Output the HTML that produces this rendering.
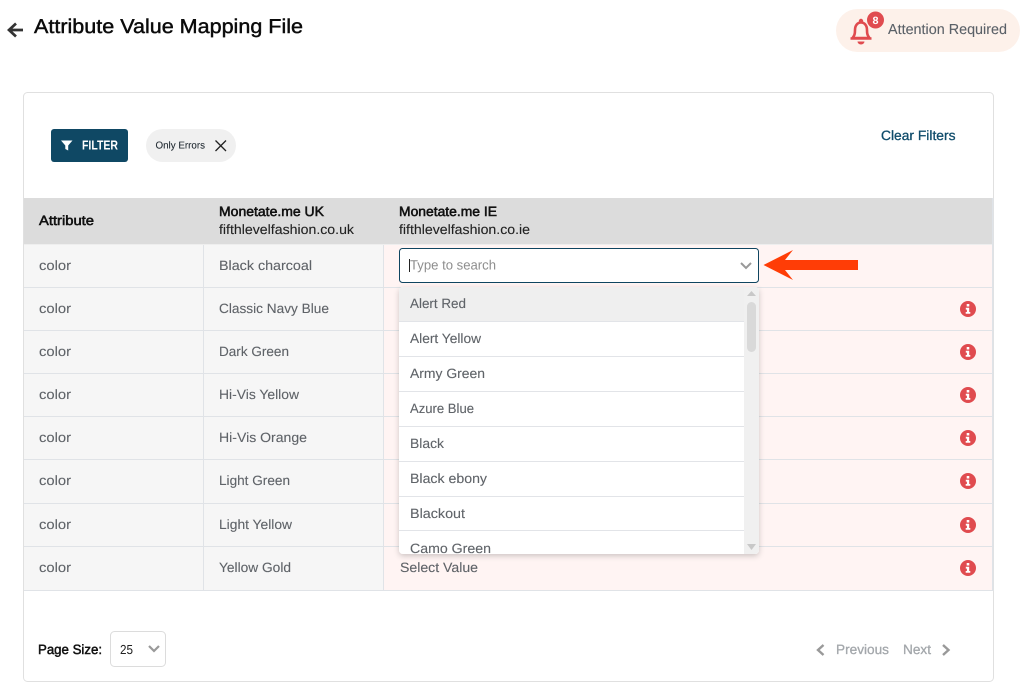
<!DOCTYPE html>
<html lang="en"><head><meta charset="utf-8"><title>Attribute Value Mapping File</title>
<style>
html,body{margin:0;padding:0;background:#fff;width:1022px;height:690px;overflow:hidden}
svg{display:block}
text{font-family:"Liberation Sans",Arial,sans-serif;font-size:13.5px;fill:#5f6368}
.t{fill:#5f6368;stroke:#5f6368;stroke-width:.1px}
.h{fill:#111;stroke:#111;stroke-width:.55px}
.k{fill:#222;stroke:#222;stroke-width:.1px}
</style></head><body>
<svg width="1022" height="690" viewBox="0 0 1022 690" xmlns="http://www.w3.org/2000/svg" text-rendering="geometricPrecision">
<rect width="1022" height="690" fill="#fff"/>
<!-- header -->
<path d="M23 30H9.500M16 23.500l-7 6.500 7 6.500" fill="none" stroke="#333" stroke-width="2.700"/>
<text x="34" y="33" textLength="269" lengthAdjust="spacingAndGlyphs" style="font-size:20px;fill:#0b0b0b;stroke:#0b0b0b;stroke-width:.45px">Attribute Value Mapping File</text>
<rect x="836" y="9" width="184" height="43" rx="21.500" fill="#fdf1ea"/>
<path d="M852.500 38c2-2.500 2.500-4 2.500-8 0-4.500 2.500-7.500 6-7.500s6 3 6 7.500c0 4 .5 5.500 2.500 8z" fill="none" stroke="#e04b4f" stroke-width="2.600" stroke-linejoin="round"/>
<path d="M850.500 38.500h21" stroke="#e04b4f" stroke-width="2.600"/>
<path d="M857.500 41.500h7a3.500 3 0 0 1-7 0z" fill="#e04b4f"/>
<circle cx="861" cy="21" r="2.200" fill="#e04b4f"/>
<circle cx="875.500" cy="20" r="8.500" fill="#e04b4f"/>
<text x="872.500" y="24" textLength="6" lengthAdjust="spacingAndGlyphs" style="font-size:10.500px;font-weight:bold;fill:#fff">8</text>
<text x="888" y="34" textLength="119" lengthAdjust="spacingAndGlyphs" style="font-size:14.500px;fill:#5b6168;stroke:#5b6168;stroke-width:.1px">Attention Required</text>
<!-- card -->
<rect x="23.500" y="92.500" width="970" height="589" rx="4" fill="#fff" stroke="#e0e0e0"/>
<rect x="51" y="129" width="77" height="33" rx="3" fill="#0f4864"/>
<path d="M61 140.500h11.500l-4.300 5v5l-2.900-1.500v-3.500z" fill="#fff"/>
<text x="82" y="149.500" textLength="36" lengthAdjust="spacingAndGlyphs" style="font-size:13px;font-weight:bold;fill:#fff">FILTER</text>
<rect x="146" y="129" width="90" height="33" rx="16.500" fill="#f0f0f0"/>
<text x="155.500" y="148.500" textLength="49.500" lengthAdjust="spacingAndGlyphs" style="font-size:10px;fill:#222b33;stroke:#222b33;stroke-width:.1px">Only Errors</text>
<path d="M215.500 140.500l10.500 10.500M226 140.500l-10.500 10.500" stroke="#222" stroke-width="1.300"/>
<text x="881" y="140" textLength="74.500" lengthAdjust="spacingAndGlyphs" style="font-size:13.500px;fill:#0f4c6b;stroke:#0f4c6b;stroke-width:.3px">Clear Filters</text>
<!-- table -->
<rect x="24" y="198" width="969" height="46.500" fill="#dcdcdc"/>
<text class="h" x="39" y="225" textLength="55" lengthAdjust="spacingAndGlyphs">Attribute</text>
<text class="h" x="219" y="216" textLength="105" lengthAdjust="spacingAndGlyphs">Monetate.me UK</text>
<text class="k" x="219" y="234" textLength="135" lengthAdjust="spacingAndGlyphs">fifthlevelfashion.co.uk</text>
<text class="h" x="399" y="216" textLength="98" lengthAdjust="spacingAndGlyphs">Monetate.me IE</text>
<text class="k" x="399" y="234" textLength="131" lengthAdjust="spacingAndGlyphs">fifthlevelfashion.co.ie</text>
<rect x="24" y="245" width="360" height="345" fill="#f6f6f6"/>
<rect x="384" y="245" width="608" height="345" fill="#fff4f3"/>
<g stroke="#e0e3e7" stroke-width="1" fill="none">
<path d="M24 287.500H992M24 330.500H992M24 373.500H992M24 416.500H992M24 459.500H992M24 503.500H992M24 546.500H992M24 590.500H992"/>
<path d="M203.500 245V590M383.500 245V590"/>
</g>
<rect x="992" y="198" width="1.500" height="393" fill="#dfe3e8"/>
<g>
<text class="t" x="39" y="270" textLength="32" lengthAdjust="spacingAndGlyphs">color</text>
<text class="t" x="39" y="313" textLength="32" lengthAdjust="spacingAndGlyphs">color</text>
<text class="t" x="39" y="356" textLength="32" lengthAdjust="spacingAndGlyphs">color</text>
<text class="t" x="39" y="399" textLength="32" lengthAdjust="spacingAndGlyphs">color</text>
<text class="t" x="39" y="442" textLength="32" lengthAdjust="spacingAndGlyphs">color</text>
<text class="t" x="39" y="485" textLength="32" lengthAdjust="spacingAndGlyphs">color</text>
<text class="t" x="39" y="529" textLength="32" lengthAdjust="spacingAndGlyphs">color</text>
<text class="t" x="39" y="572" textLength="32" lengthAdjust="spacingAndGlyphs">color</text>
<text class="t" x="219" y="270" textLength="93" lengthAdjust="spacingAndGlyphs">Black charcoal</text>
<text class="t" x="219" y="313" textLength="110" lengthAdjust="spacingAndGlyphs">Classic Navy Blue</text>
<text class="t" x="219" y="356" textLength="70" lengthAdjust="spacingAndGlyphs">Dark Green</text>
<text class="t" x="219" y="399" textLength="80" lengthAdjust="spacingAndGlyphs">Hi-Vis Yellow</text>
<text class="t" x="219" y="442" textLength="88" lengthAdjust="spacingAndGlyphs">Hi-Vis Orange</text>
<text class="t" x="219" y="485" textLength="71" lengthAdjust="spacingAndGlyphs">Light Green</text>
<text class="t" x="219" y="529" textLength="73" lengthAdjust="spacingAndGlyphs">Light Yellow</text>
<text class="t" x="219" y="572" textLength="72" lengthAdjust="spacingAndGlyphs">Yellow Gold</text>
<text class="t" x="400" y="572" textLength="78" lengthAdjust="spacingAndGlyphs">Select Value</text>
</g>
<!-- info icons -->
<defs><g id="info"><circle r="8" fill="#e04b4f"/><rect x="-1.300" y="-5" width="2.600" height="2.500" fill="#fff"/><path d="M-2.200-1.200H1.200V3H2.300V4.800H-2.300V3H-1.100V.6H-2.200z" fill="#fff"/></g></defs>
<use href="#info" x="968" y="309"/>
<use href="#info" x="968" y="352"/>
<use href="#info" x="968" y="395"/>
<use href="#info" x="968" y="438"/>
<use href="#info" x="968" y="481"/>
<use href="#info" x="968" y="525"/>
<use href="#info" x="968" y="568"/>
<!-- input -->
<rect x="399.500" y="248.500" width="359" height="34" rx="3" fill="#fff" stroke="#0f4560"/>
<rect x="409" y="259" width="1" height="13" fill="#222"/>
<text x="410" y="269.500" textLength="86" lengthAdjust="spacingAndGlyphs" style="font-size:13.500px;fill:#8e8e8e">Type to search</text>
<path d="M741 263l5 5 5-5" fill="none" stroke="#999" stroke-width="2"/>
<path d="M763.500 265L793 250 785 260H858V270H785L793 280Z" fill="#ff3d06"/>
<!-- dropdown -->
<defs><filter id="s" x="-10%" y="-10%" width="120%" height="125%"><feDropShadow dx="0" dy="2" stdDeviation="3" flood-color="#000" flood-opacity=".2"/></filter>
<clipPath id="c"><rect x="399" y="287" width="360" height="267" rx="4"/></clipPath></defs>
<rect x="399" y="287" width="360" height="267" rx="4" fill="#fff" filter="url(#s)"/>
<g clip-path="url(#c)">
<rect x="399" y="287" width="345" height="34" fill="#efefef"/>
<rect x="744" y="287" width="15" height="267" fill="#f0f0f0"/>
<rect x="747" y="302" width="9" height="50" rx="4.500" fill="#d9d9d9"/>
<path d="M747 296l4.500-5 4.500 5z" fill="#c8c8c8"/>
<path d="M747 544l4.500 6 4.500-6z" fill="#c8c8c8"/>
<path d="M399 321.500H744M399 356.500H744M399 391.500H744M399 426.500H744M399 461.500H744M399 496.500H744M399 530.500H744" stroke="#e2e4e8"/>
<text class="t" x="410" y="308" textLength="56" lengthAdjust="spacingAndGlyphs">Alert Red</text>
<text class="t" x="410" y="343" textLength="71" lengthAdjust="spacingAndGlyphs">Alert Yellow</text>
<text class="t" x="410" y="378" textLength="75" lengthAdjust="spacingAndGlyphs">Army Green</text>
<text class="t" x="410" y="413" textLength="64" lengthAdjust="spacingAndGlyphs">Azure Blue</text>
<text class="t" x="410" y="448" textLength="34" lengthAdjust="spacingAndGlyphs">Black</text>
<text class="t" x="410" y="483" textLength="77" lengthAdjust="spacingAndGlyphs">Black ebony</text>
<text class="t" x="410" y="518" textLength="55" lengthAdjust="spacingAndGlyphs">Blackout</text>
<text class="t" x="410" y="553" textLength="81" lengthAdjust="spacingAndGlyphs">Camo Green</text>
</g>
<!-- footer -->
<text x="38" y="654" textLength="64" lengthAdjust="spacingAndGlyphs" style="font-size:13.500px;fill:#111;stroke:#111;stroke-width:.5px">Page Size:</text>
<rect x="110.500" y="631.500" width="55" height="35" rx="4" fill="#fff" stroke="#dcdcdc"/>
<text x="120" y="654" textLength="13" lengthAdjust="spacingAndGlyphs" style="font-size:13px;fill:#222">25</text>
<path d="M149 646l5 5 5-5" fill="none" stroke="#999" stroke-width="2.200"/>
<path d="M823.500 645l-5.500 5 5.500 5" fill="none" stroke="#999" stroke-width="2.400"/>
<text x="836" y="654" textLength="53" lengthAdjust="spacingAndGlyphs" style="font-size:13.500px;fill:#a3a7ab;stroke:#a3a7ab;stroke-width:.3px">Previous</text>
<text x="903" y="654" textLength="28" lengthAdjust="spacingAndGlyphs" style="font-size:13.500px;fill:#a3a7ab;stroke:#a3a7ab;stroke-width:.3px">Next</text>
<path d="M943 645l5.500 5-5.500 5" fill="none" stroke="#999" stroke-width="2.400"/>
</svg>
</body></html>
